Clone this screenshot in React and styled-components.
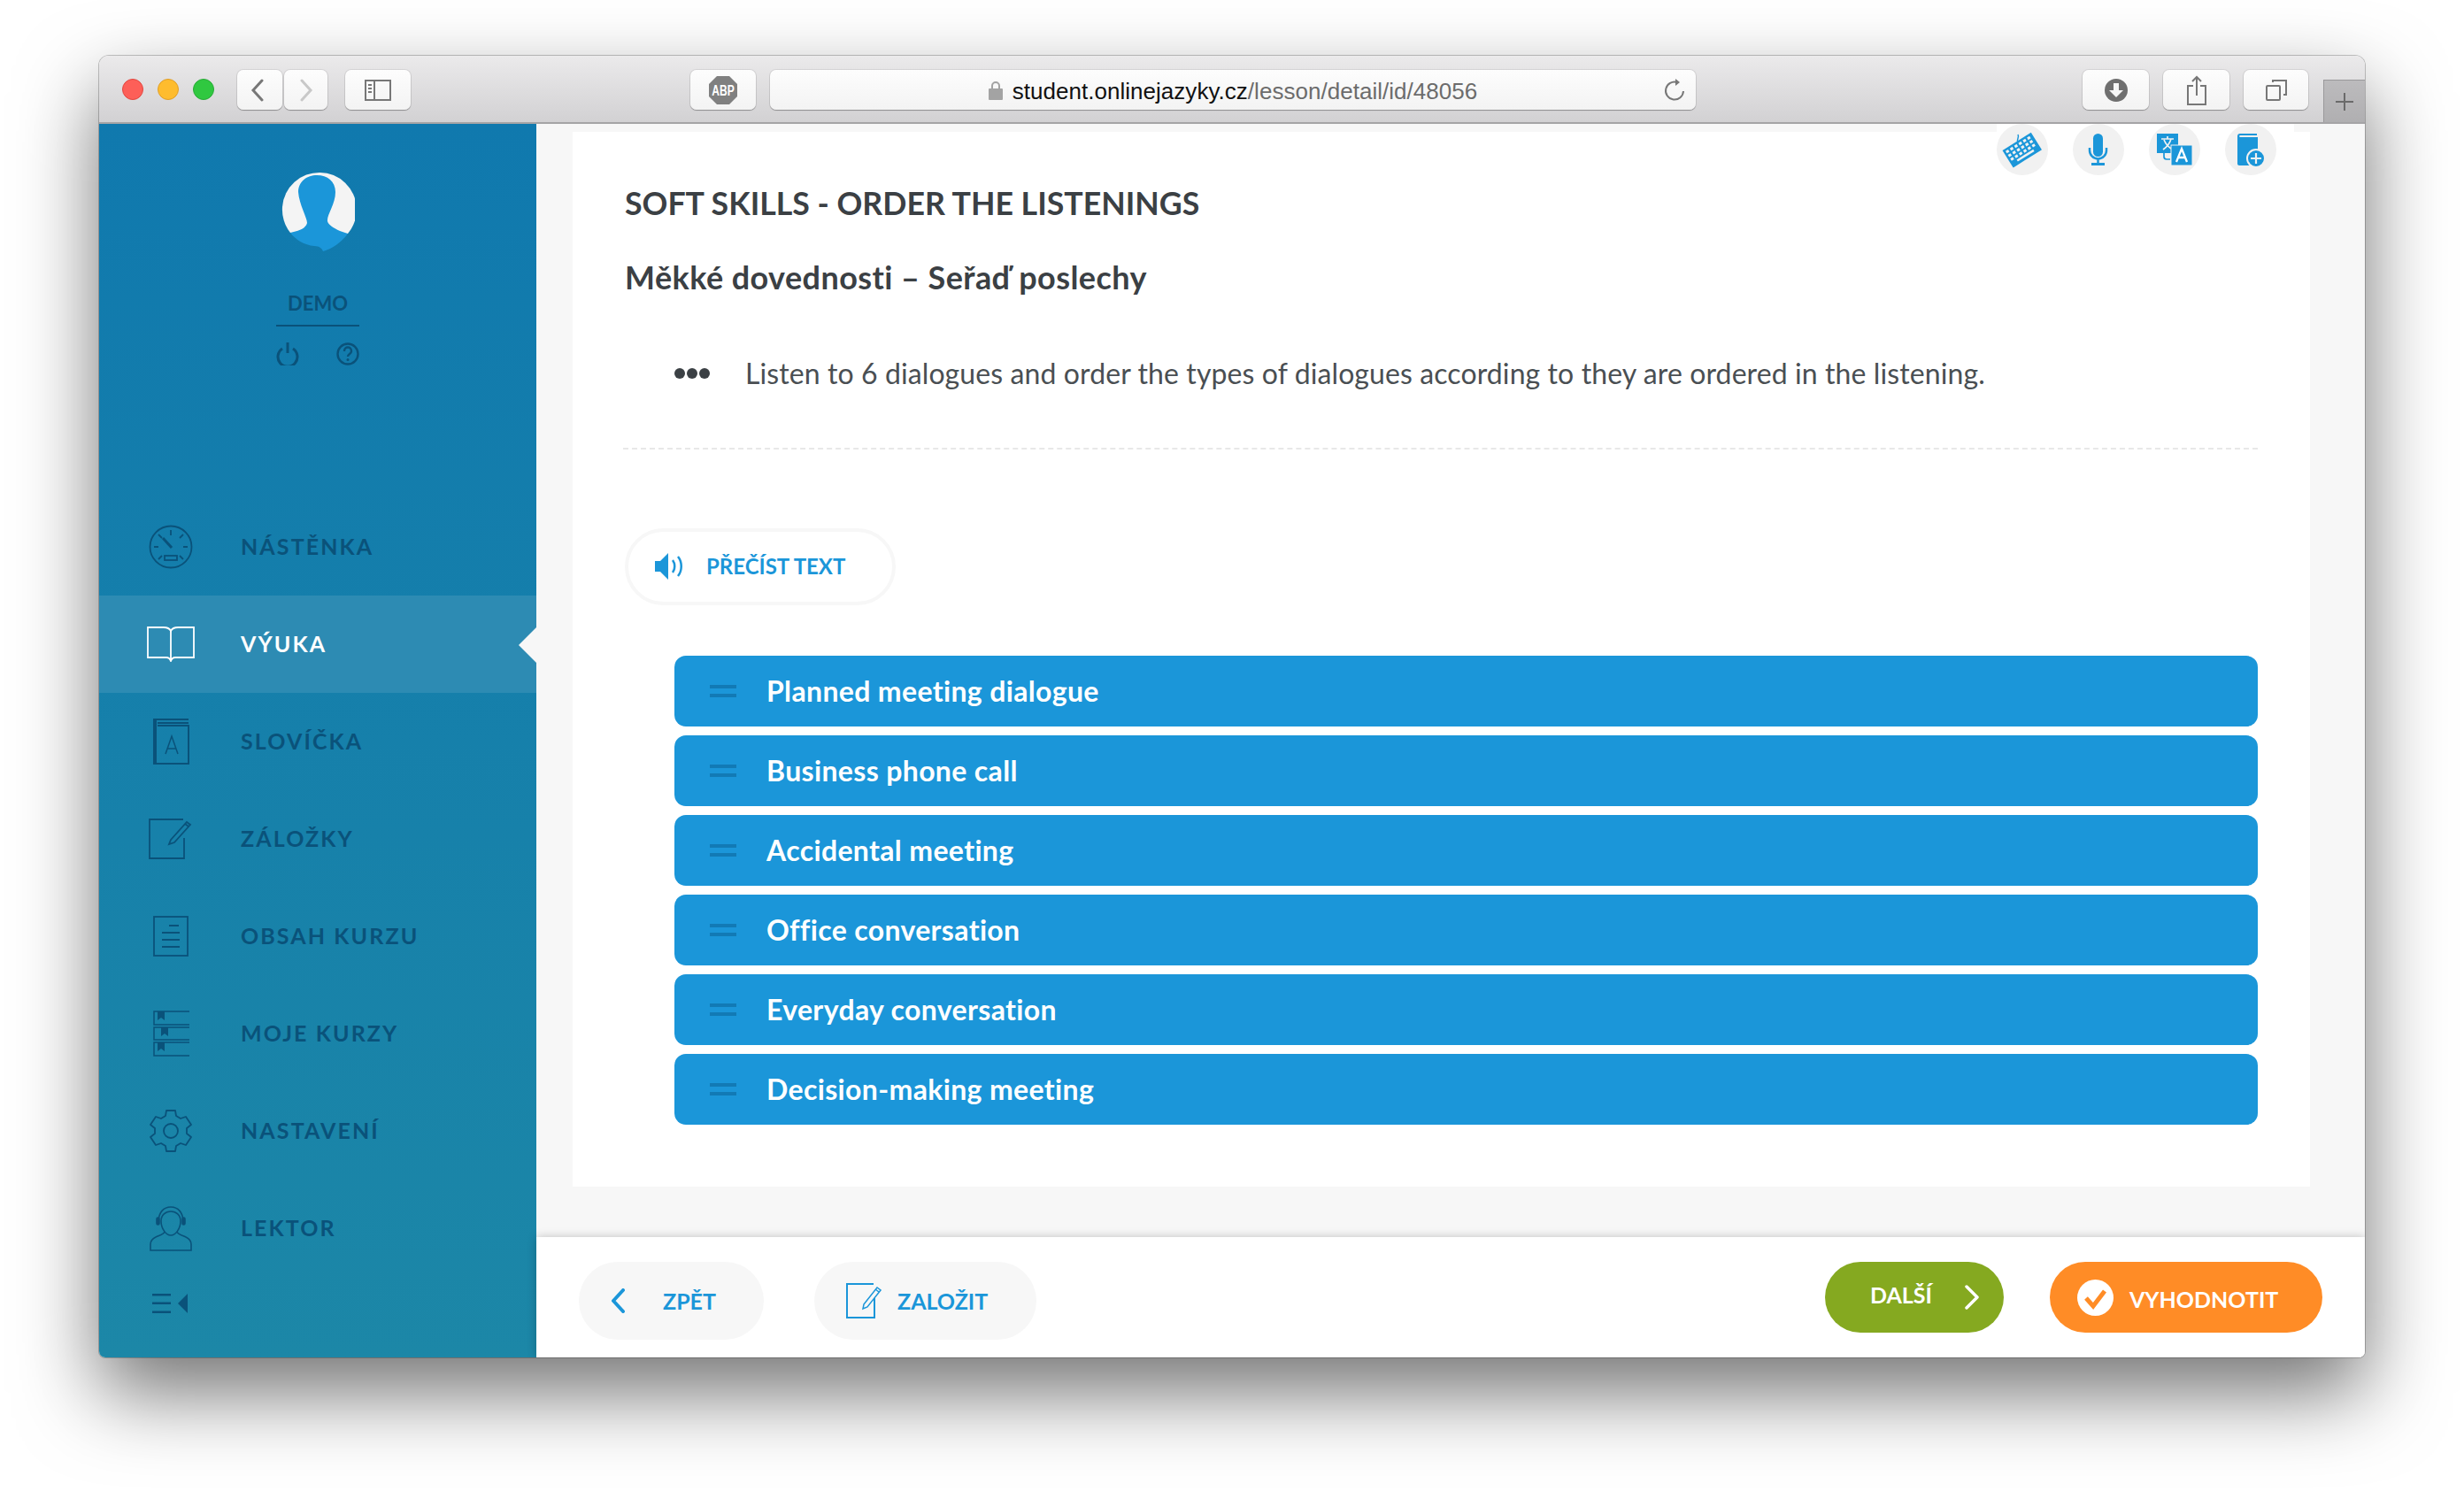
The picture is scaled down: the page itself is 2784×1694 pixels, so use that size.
import styled, { createGlobalStyle } from 'styled-components';

const GlobalStyle = createGlobalStyle`
  html, body { margin: 0; padding: 0; background: #fff; }
  body { width: 2784px; height: 1694px; overflow: hidden; font-family: 'Lato', 'Noto Sans', sans-serif; }
`;

const Page = styled.div`
  padding: 63px 112px 0;
`;

const BrowserWindow = styled.div`
  width: 2560px;
  height: 1471px;
  display: flex;
  flex-direction: column;
  border-radius: 11px 11px 7px 7px;
  box-shadow: 0 0 0 1px rgba(0, 0, 0, 0.22), 0 40px 90px rgba(0, 0, 0, 0.55);
  overflow: hidden;
  position: relative;
`;

const TitleBar = styled.div`
  height: 77px;
  flex: none;
  box-sizing: border-box;
  display: flex;
  align-items: center;
  padding: 2px 0 0 26px;
  background: linear-gradient(#ebeaeb, #d2d1d3);
  border-bottom: 2px solid #a5a4a6;
`;

const Lights = styled.div`
  display: flex;
  gap: 16px;
  margin: 0 26px 2px 0;
`;

const Light = styled.span`
  width: 24px;
  height: 24px;
  border-radius: 50%;
  box-sizing: border-box;
  background: ${(p) => p.$fill};
  border: 1px solid ${(p) => p.$edge};
`;

const BarButton = styled.div`
  width: ${(p) => p.$w}px;
  height: 45px;
  margin-left: ${(p) => p.$ml || 0}px;
  box-sizing: border-box;
  flex: none;
  display: flex;
  align-items: center;
  justify-content: center;
  border-radius: 7px;
  background: linear-gradient(#fdfdfd, #f3f3f3);
  box-shadow: 0 1px 1px rgba(0, 0, 0, 0.28), 0 0 0 1px rgba(0, 0, 0, 0.08);
`;

const BackGlyph = styled.svg`
  margin-right: 5px;
`;

const UrlBar = styled(BarButton)`
  position: relative;
  gap: 11px;
  font-family: 'Liberation Sans', sans-serif;
  font-size: 26px;
  color: #111;
`;

const UrlPath = styled.span`
  color: #6c6c6c;
`;

const UrlText = styled.span`
  white-space: nowrap;
  letter-spacing: 0.03px;
  padding-top: 3px;
`;

const Reload = styled.svg`
  position: absolute;
  right: 11px;
  top: 9px;
`;

const PlusTab = styled.div`
  width: 47px;
  height: 48px;
  align-self: flex-end;
  margin-left: 17px;
  box-sizing: border-box;
  display: flex;
  align-items: center;
  justify-content: center;
  background: linear-gradient(#bcbbbd, #b0afb1);
  border-left: 1px solid #9a999b;
  border-top: 1px solid #9a999b;
`;

const Body = styled.div`
  flex: 1;
  display: flex;
  min-height: 0;
`;

const Sidebar = styled.aside`
  width: 494px;
  flex: none;
  display: flex;
  flex-direction: column;
  align-items: center;
  padding-top: 51px;
  box-sizing: border-box;
  background: linear-gradient(#1079ae, #1c87a7);
`;

const UserName = styled.div`
  width: 94px;
  margin-top: 43px;
  padding-bottom: 9px;
  border-bottom: 2px solid #0a527a;
  text-align: center;
  font-size: 22px;
  font-weight: 700;
  line-height: 30px;
  color: #0a527a;
`;

const UserTools = styled.div`
  width: 94px;
  margin-top: 18px;
  display: flex;
  justify-content: space-between;
`;

const Nav = styled.nav`
  width: 100%;
  margin-top: 150px;
`;

const NavRow = styled.div`
  height: 110px;
  position: relative;
  display: flex;
  align-items: center;
  padding-left: 48px;
  background: ${(p) => (p.$active ? '#2d8bb3' : 'transparent')};
  color: ${(p) => (p.$active ? '#fff' : '#0a527a')};

  ${(p) =>
    p.$active &&
    `&::after {
      content: '';
      position: absolute;
      right: 0;
      top: 36px;
      border-style: solid;
      border-width: 20px 20px 20px 0;
      border-color: transparent #f7f7f7 transparent transparent;
    }`}
`;

const NavIcon = styled.div`
  width: 66px;
  flex: none;
  display: flex;
  justify-content: center;
`;

const NavLabel = styled.span`
  margin-left: 46px;
  padding-bottom: 3px;
  font-size: 25px;
  font-weight: 700;
  letter-spacing: 2.1px;
`;

const Collapse = styled.div`
  align-self: flex-start;
  margin: 19px 0 0 60px;
  display: flex;
`;

const Main = styled.main`
  flex: 1;
  min-width: 0;
  display: flex;
  flex-direction: column;
  background: #f7f7f7;
`;

const Card = styled.section`
  flex: 1;
  margin: 9px 62px 57px 41px;
  padding: 0 59px;
  background: #fff;
  display: flex;
  flex-direction: column;
`;

const ToolStrip = styled.div`
  margin: -9px -41px 0 auto;
  padding-right: 20px;
  display: flex;
  gap: 28px;
  background: #fff;
`;

const ToolCircle = styled.div`
  width: 58px;
  height: 58px;
  border-radius: 50%;
  background: #f1f1f1;
`;

const Title = styled.h1`
  margin: 11px 0 0;
  font-size: 35.7px;
  line-height: 42px;
  font-weight: 700;
  color: #3b4044;
`;

const Subtitle = styled.h2`
  margin: 41px 0 0;
  font-size: 36px;
  line-height: 42px;
  letter-spacing: 0.42px;
  font-weight: 700;
  color: #3b4044;
`;

const Instruction = styled.div`
  margin: 68px 0 0 56px;
  display: flex;
  align-items: center;
  gap: 40px;
  font-size: 32px;
  letter-spacing: 0.1px;
  line-height: 40px;
  color: #4a4f53;
`;

const Dots = styled.div`
  display: flex;
  gap: 2px;
`;

const Dot = styled.span`
  width: 12px;
  height: 12px;
  border-radius: 50%;
  background: #3b4044;
`;

const Divider = styled.div`
  margin: 64px 0 0 -2px;
  border-top: 2px dashed #e8e8e8;
`;

const ReadButton = styled.div`
  align-self: flex-start;
  margin-top: 89px;
  width: 306px;
  height: 87px;
  box-sizing: border-box;
  border: 4px solid #f7f7f7;
  border-radius: 44px;
  padding: 0 0 2px 30px;
  display: flex;
  align-items: center;
  gap: 26px;
  font-size: 24px;
  font-weight: 700;
  color: #1b96d9;
`;

const OrderList = styled.div`
  margin: 57px 0 0 56px;
  display: flex;
  flex-direction: column;
  gap: 10px;
`;

const OrderRow = styled.div`
  height: 80px;
  box-sizing: border-box;
  display: flex;
  align-items: center;
  padding: 0 0 2px 40px;
  border-radius: 13px;
  background: #1b96d9;
  font-size: 32px;
  letter-spacing: 0.35px;
  font-weight: 700;
  color: #fff;
`;

const Handle = styled.div`
  width: 30px;
  height: 14px;
  box-sizing: border-box;
  margin: 2px 34px 0 0;
  border-top: 4px solid #127ab5;
  border-bottom: 4px solid #127ab5;
`;

const Footer = styled.footer`
  height: 136px;
  flex: none;
  box-sizing: border-box;
  padding: 28px 48px 0;
  display: flex;
  align-items: flex-start;
  background: #fff;
  box-shadow: 0 0 10px rgba(0, 0, 0, 0.22);
`;

const Pill = styled.div`
  height: ${(p) => p.$h}px;
  width: ${(p) => p.$w}px;
  margin-left: ${(p) => p.$ml || 0}px;
  box-sizing: border-box;
  flex: none;
  display: flex;
  align-items: center;
  padding-left: ${(p) => p.$pl}px;
  gap: ${(p) => p.$gap}px;
  border-radius: 44px;
  background: ${(p) => p.$bg};
  color: ${(p) => p.$color};
  font-size: 25px;
  font-weight: 700;
`;

const Spacer = styled.div`
  flex: 1;
`;

const PillText = styled.span`
  position: relative;
  top: ${(p) => p.$up || 0}px;
`;

const items = ['Planned meeting dialogue', 'Business phone call', 'Accidental meeting', 'Office conversation', 'Everyday conversation', 'Decision-making meeting'];

const DARK = '#0a527a';

function Line({ children, w = 46, h = 46, color = DARK, sw = 1.8 }) {
  return (
    <svg width={w} height={h} viewBox={`0 0 ${w} ${h}`} fill="none" stroke={color} strokeWidth={sw}>
      {children}
    </svg>
  );
}

const navEntries = [
  {
    label: 'NÁSTĚNKA',
    icon: (
      <Line w={50} h={50}>
        <circle cx="25" cy="25" r="23.5" />
        <path d="M25 6v6M11 11l4 4M39 11l-4 4M6 25h5M39 25h5M11 39l4-4M39 39l-4-4" />
        <path d="M16 15l10 11" strokeWidth="3" />
        <rect x="18" y="35" width="14" height="5" />
      </Line>
    ),
  },
  {
    label: 'VÝUKA',
    active: true,
    icon: (
      <Line w={54} h={40} color="#fff">
        <path d="M1 1h18c4 0 7 2 8 4 1-2 4-4 8-4h18v34H32c-2 0-4 1-5 4-1-3-3-4-5-4H1z" />
        <path d="M27 5v33" />
      </Line>
    ),
  },
  {
    label: 'SLOVÍČKA',
    icon: (
      <Line w={42} h={52}>
        <path d="M41 1H2v50h39V8H6" strokeWidth="2" />
        <path d="M3 1v50" strokeWidth="4" />
        <path d="M6 5h35" strokeWidth="2" />
        <path d="M15 40l7-20 7 20M17 34h10" strokeWidth="1.5" />
      </Line>
    ),
  },
  {
    label: 'ZÁLOŽKY',
    icon: (
      <Line w={50} h={46}>
        <path d="M39 1H1v44h39V22" />
        <path d="M25 24L43 4l4 3-18 20-6 2z" />
        <path d="M41 6l4 3" />
      </Line>
    ),
  },
  {
    label: 'OBSAH KURZU',
    icon: (
      <Line w={40} h={46}>
        <rect x="1" y="1" width="38" height="44" />
        <path d="M18 11h11M10 19h20M10 27h20M10 35h20" />
      </Line>
    ),
  },
  {
    label: 'MOJE KURZY',
    icon: (
      <Line w={41} h={52} sw={1.5}>
        <path d="M41 1H1v15h40M41 19H1v14h40M41 36H1v15h40" />
        <path d="M5 1h8v10l-4-3-4 3zM9 19h8v10l-4-3-4 3zM5 36h8v10l-4-3-4 3z" fill={DARK} stroke="none" />
      </Line>
    ),
  },
  {
    label: 'NASTAVENÍ',
    icon: (
      <Line w={50} h={50}>
        <circle cx="25" cy="25" r="8" />
        <path d="M20 2l-1 6-5 3-6-2-6 9 5 4v6l-5 4 6 9 6-2 5 3 1 6h10l1-6 5-3 6 2 6-9-5-4v-6l5-4-6-9-6 2-5-3-1-6z" strokeLinejoin="round" />
      </Line>
    ),
  },
  {
    label: 'LEKTOR',
    icon: (
      <Line w={48} h={51} sw={1.6}>
        <path d="M10 18C10 7 16 1 24 1s14 6 14 17" />
        <path d="M13 17c0-7 5-11 11-11s11 4 11 11c0 9-6 16-11 16S13 26 13 17z" />
        <rect x="8" y="13" width="3" height="8" rx="1.500" fill={DARK} />
        <rect x="37" y="13" width="3" height="8" rx="1.500" fill={DARK} />
        <path d="M17 29c-1 3-6 4-10 6-4 2-6 4-6 8v7h46v-7c0-4-2-6-6-8-4-2-9-3-10-6" />
      </Line>
    ),
  },
];

function Avatar() {
  return (
    <svg width="84" height="94" viewBox="0 0 84 94">
      <path d="M11 72A42 42 0 1 1 76 73Z" fill="#f4f4f4" />
      <path d="M11 72C20 70 28 68 30 61C30 55 21 40 20 26C20 14 30 7 41 7C53 7 62 14 62 26C62 40 52 52 53 59C54 64 65 70 76 73C68 84 58 90 48 93C47 90 44 87 38 87C27 86 17 80 11 72Z" fill="#1b96d9" />
    </svg>
  );
}

function Tools() {
  return (
    <ToolStrip>
      <ToolCircle>
        <svg width="58" height="58" viewBox="0 0 58 58">
          <path d="M24 20c-2-3 2-4 0-8" fill="none" stroke="#1b96d9" strokeWidth="1.500" />
          <g transform="rotate(-32 29 30)">
            <rect x="10" y="18" width="38" height="23" fill="#1b96d9" />
            {[0, 1, 2].map((r) =>
              [0, 1, 2, 3, 4, 5].map((c) => (
                <rect key={`${r}-${c}`} x={12.5 + c * 5.7} y={20.5 + r * 5} width="3.400" height="3" fill="#f1f1f1" />
              ))
            )}
            <rect x="18" y="35.500" width="22" height="2.500" fill="#f1f1f1" />
          </g>
        </svg>
      </ToolCircle>
      <ToolCircle>
        <svg width="58" height="58" viewBox="0 0 58 58">
          <rect x="23" y="11" width="11" height="26" rx="5.500" fill="#1b96d9" />
          <path d="M19 27v3a9.500 9.500 0 0 0 19 0v-3M28.500 40v5" fill="none" stroke="#1b96d9" strokeWidth="2.500" />
          <rect x="21" y="44" width="15" height="3" fill="#1b96d9" />
        </svg>
      </ToolCircle>
      <ToolCircle>
        <svg width="58" height="58" viewBox="0 0 58 58">
          <rect x="9" y="11" width="24" height="22" fill="#1b96d9" />
          <path d="M14 17h14M21 14v3M25 17c-2 7-6 10-9 12M17 18c2 5 6 9 10 11" fill="none" stroke="#f1f1f1" strokeWidth="1.700" />
          <path d="M17 33v4c0 2 1 3 3 3h4" fill="none" stroke="#1b96d9" strokeWidth="1.700" />
          <rect x="25" y="24" width="24" height="23" fill="#1b96d9" stroke="#f1f1f1" strokeWidth="1" />
          <path d="M31 43l6-15 6 15M33.500 38h7" fill="none" stroke="#fff" strokeWidth="2.300" />
        </svg>
      </ToolCircle>
      <ToolCircle>
        <svg width="58" height="58" viewBox="0 0 58 58">
          <path d="M17 11h19v2H17c-1 0-1 2 0 2h20v32H16c-1 0-2-1-2-2V14c0-2 1-3 3-3z" fill="#1b96d9" />
          <circle cx="35" cy="39" r="10" fill="#1b96d9" stroke="#f1f1f1" strokeWidth="2" />
          <path d="M29 39h12M35 33v12" stroke="#f1f1f1" strokeWidth="2.200" />
        </svg>
      </ToolCircle>
    </ToolStrip>
  );
}

export default function App() {
  return (
    <Page>
      <GlobalStyle />
      <BrowserWindow>
        <TitleBar>
          <Lights>
            <Light $fill="#fd5f58" $edge="#e2463f" />
            <Light $fill="#febc2e" $edge="#e09e28" />
            <Light $fill="#30c840" $edge="#28aa36" />
          </Lights>
          <BarButton $w={51}>
            <BackGlyph width="16" height="26" viewBox="0 0 16 26" fill="none" stroke="#777" strokeWidth="3" strokeLinecap="round">
              <path d="M13 2L3 13l10 11" />
            </BackGlyph>
          </BarButton>
          <BarButton $w={49} $ml={2}>
            <svg width="16" height="26" viewBox="0 0 16 26" fill="none" stroke="#c8c8c8" strokeWidth="3" strokeLinecap="round">
              <path d="M3 2l10 11L3 24" />
            </svg>
          </BarButton>
          <BarButton $w={74} $ml={20}>
            <svg width="30" height="24" viewBox="0 0 30 24" fill="none" stroke="#777" strokeWidth="2">
              <rect x="1" y="1" width="28" height="22" />
              <path d="M11 1v22" />
              <path d="M4 6h4M4 10h4M4 14h4" />
            </svg>
          </BarButton>
          <BarButton $w={74} $ml={316}>
            <svg width="34" height="34" viewBox="0 0 34 34">
              <path d="M10 1h14l9 9v14l-9 9H10l-9-9V10z" fill="#808080" />
              <text transform="translate(17 23) scale(0.86 1.2)" textAnchor="middle" fontFamily="Liberation Sans, sans-serif" fontSize="14" fontWeight="700" fill="#fff">ABP</text>
            </svg>
          </BarButton>
          <UrlBar $w={1046} $ml={16}>
            <svg width="16" height="22" viewBox="0 0 16 22">
              <path d="M4 9V6a4 4 0 0 1 8 0v3" fill="none" stroke="#a3a3a3" strokeWidth="2" />
              <rect y="9" width="16" height="13" rx="1" fill="#a3a3a3" />
            </svg>
            <UrlText>
              student.onlinejazyky.cz<UrlPath>/lesson/detail/id/48056</UrlPath>
            </UrlText>
            <Reload width="26" height="28" viewBox="0 0 26 28" fill="none" stroke="#777" strokeWidth="2">
              <path d="M16 5a10 10 0 1 0 7 10" />
              <path d="M14 1l5 4-5 4" fill="#777" stroke="none" />
            </Reload>
          </UrlBar>
          <BarButton $w={75} $ml={437}>
            <svg width="26" height="26" viewBox="0 0 26 26">
              <circle cx="13" cy="13" r="13" fill="#6f6f6f" />
              <path d="M10 5h6v8h5l-8 8-8-8h5z" fill="#f6f6f6" />
            </svg>
          </BarButton>
          <BarButton $w={75} $ml={16}>
            <svg width="24" height="34" viewBox="0 0 24 34" fill="none" stroke="#777" strokeWidth="2">
              <path d="M8 12H2v21h20V12h-6M12 23V2M7 7l5-5 5 5" />
            </svg>
          </BarButton>
          <BarButton $w={73} $ml={16}>
            <svg width="24" height="24" viewBox="0 0 24 24" fill="none" stroke="#777" strokeWidth="2">
              <rect x="1" y="7" width="15" height="16" rx="1" />
              <path d="M8 3V1h15v16h-3" />
            </svg>
          </BarButton>
          <PlusTab>
            <svg width="20" height="20" viewBox="0 0 20 20" stroke="#6a6a6a" strokeWidth="2">
              <path d="M10 0v20M0 10h20" />
            </svg>
          </PlusTab>
        </TitleBar>
        <Body>
          <Sidebar>
            <Avatar />
            <UserName>DEMO</UserName>
            <UserTools>
              <svg width="26" height="26" viewBox="0 0 26 26" fill="none" stroke={DARK} strokeWidth="3">
                <path d="M7 7a11 11 0 1 0 12 0M13 0v12" />
              </svg>
              <svg width="26" height="26" viewBox="0 0 26 26" fill="none" stroke={DARK} strokeWidth="2.400">
                <circle cx="13" cy="13" r="11.500" />
                <path d="M9 10c0-6 8-6 8 0 0 3-4 3-4 6" />
                <circle cx="13" cy="19.500" r="1.500" fill={DARK} stroke="none" />
              </svg>
            </UserTools>
            <Nav>
              {navEntries.map((n) => (
                <NavRow key={n.label} $active={n.active}>
                  <NavIcon>{n.icon}</NavIcon>
                  <NavLabel>{n.label}</NavLabel>
                </NavRow>
              ))}
            </Nav>
            <Collapse>
              <svg width="40" height="22" viewBox="0 0 40 22" fill={DARK}>
                <rect width="21" height="2.500" y="0" />
                <rect width="21" height="2.500" y="9.500" />
                <rect width="21" height="2.500" y="19.500" />
                <path d="M40 0v22L29 11z" />
              </svg>
            </Collapse>
          </Sidebar>
          <Main>
            <Card>
              <Tools />
              <Title>SOFT SKILLS - ORDER THE LISTENINGS</Title>
              <Subtitle>Měkké dovednosti – Seřaď poslechy</Subtitle>
              <Instruction>
                <Dots>
                  <Dot />
                  <Dot />
                  <Dot />
                </Dots>
                <span>Listen to 6 dialogues and order the types of dialogues according to they are ordered in the listening.</span>
              </Instruction>
              <Divider />
              <ReadButton>
                <svg width="32" height="30" viewBox="0 0 32 30">
                  <path d="M0 9h6l9-9v30l-9-9H0z" fill="#1b96d9" />
                  <path d="M20 8c3 4 3 10 0 14M26 4c5 6 5 16 0 22" fill="none" stroke="#1b96d9" strokeWidth="2.500" />
                </svg>
                PŘEČÍST TEXT
              </ReadButton>
              <OrderList>
                {items.map((t) => (
                  <OrderRow key={t}>
                    <Handle />
                    {t}
                  </OrderRow>
                ))}
              </OrderList>
            </Card>
            <Footer>
              <Pill $w={209} $h={88} $pl={36} $gap={43} $bg="#f7f7f7" $color="#1b96d9">
                <svg width="16" height="28" viewBox="0 0 16 28" fill="none" stroke="#1b96d9" strokeWidth="4" strokeLinecap="round" strokeLinejoin="round">
                  <path d="M14 2L3 14l11 12" />
                </svg>
                ZPĚT
              </Pill>
              <Pill $w={251} $h={88} $ml={57} $pl={36} $gap={18} $bg="#f7f7f7" $color="#1b96d9">
                <svg width="40" height="40" viewBox="0 0 40 40" fill="none" stroke="#1b96d9" strokeWidth="1.500">
                  <path d="M31 1H1v38h31V17" strokeWidth="2" />
                  <path d="M20 24L35 5l4 3-15 19-5 2z" />
                  <path d="M33 7l4 3" />
                </svg>
                ZALOŽIT
              </Pill>
              <Spacer />
              <Pill $w={202} $h={80} $pl={51} $gap={37} $bg="#85a920" $color="#fff">
                <PillText $up={-3}>DALŠÍ</PillText>
                <svg width="16" height="28" viewBox="0 0 16 28" fill="none" stroke="#fff" strokeWidth="3.500" strokeLinecap="round" strokeLinejoin="round">
                  <path d="M2 2l12 12L2 26" />
                </svg>
              </Pill>
              <Pill $w={308} $h={80} $ml={52} $pl={31} $gap={18} $bg="#ff8c26" $color="#fff">
                <svg width="41" height="41" viewBox="0 0 41 41">
                  <circle cx="20.500" cy="20.500" r="20.500" fill="#fff" />
                  <path d="M10 21l8 9 13-17" fill="none" stroke="#ff8c26" strokeWidth="5" />
                </svg>
                <PillText $up={2}>VYHODNOTIT</PillText>
              </Pill>
            </Footer>
          </Main>
        </Body>
      </BrowserWindow>
    </Page>
  );
}
